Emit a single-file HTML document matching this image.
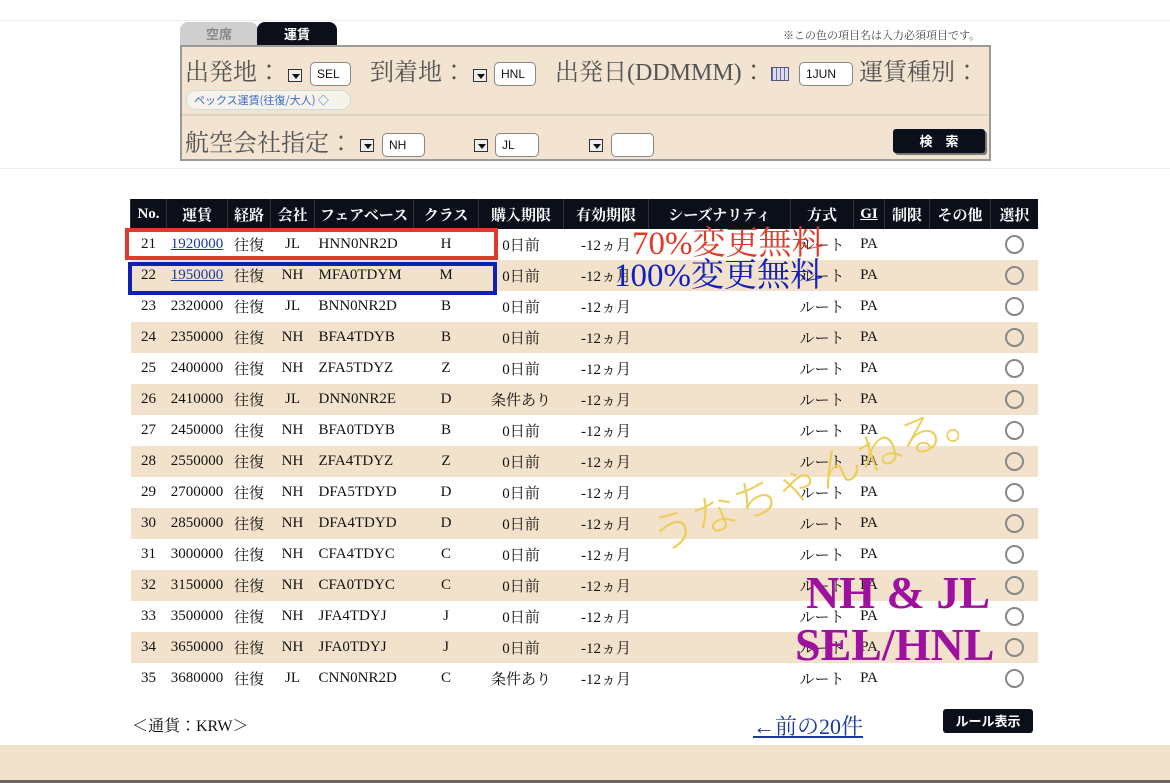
<!DOCTYPE html>
<html><head><meta charset="utf-8"><style>
*{margin:0;padding:0;box-sizing:border-box}
body{width:1170px;height:783px;background:#fff;position:relative;overflow:hidden;font-family:"Liberation Serif","Noto Serif CJK SC",serif;color:#111}
.a{position:absolute}
.tab{position:absolute;top:22px;height:24px;border-radius:8px 8px 0 0;font-size:13px;text-align:center;line-height:24px;font-family:"Noto Sans CJK JP",sans-serif;font-weight:bold}
.panel{left:180px;top:45px;width:811px;height:116px;background:#f2e4d0;border:2px solid #9a9a9a}
.lbl{position:absolute;font-size:24px;color:#555;white-space:nowrap;font-family:"Liberation Serif","Noto Serif CJK JP",serif}
.dd{position:absolute;width:14px;height:13px;border:1px solid #333;background:#eee}
.dd:after{content:"";position:absolute;left:3px;top:4px;border-left:4px solid transparent;border-right:4px solid transparent;border-top:5px solid #111}
.in{position:absolute;height:24px;background:#fff;border:1px solid #888;border-radius:5px;font-size:12px;font-family:"Liberation Sans",sans-serif;line-height:22px;padding-left:6px}
table{position:absolute;left:130px;top:199px;width:908px;border-collapse:collapse;font-size:15px}
th{background:#0b0f1a;color:#fff;height:30px;font-weight:bold;font-size:15px;border-left:1px solid #333;font-family:"Liberation Serif","Noto Serif CJK JP",serif}
td{height:31px;text-align:center;font-family:"Liberation Serif","Noto Serif CJK JP",serif;white-space:nowrap}
tr.b td{background:#f2e2cc}
td.l{text-align:left;padding-left:4px}
a{color:#1a3a9a}
.r{display:inline-block;width:19px;height:19px;border:2px solid #888;border-radius:50%;vertical-align:middle}
</style></head><body>
<div class="a" style="left:0;top:20px;width:1170px;height:1px;background:#eee"></div>
<div class="tab" style="left:180px;width:78px;background:#cfcfcf;color:#888">空席</div>
<div class="tab" style="left:257px;width:80px;background:#0b0f1a;color:#fff">運賃</div>
<div class="a" style="left:783px;top:27px;font-size:11px;color:#444;font-family:'Noto Serif CJK JP',serif">※この色の項目名は入力必須項目です。</div>
<div class="a panel">
<div class="lbl" style="left:3px;top:5px">出発地：</div>
<div class="dd" style="left:106px;top:22px"></div>
<div class="in" style="left:128px;top:15px;width:41px">SEL</div>
<div class="lbl" style="left:188px;top:5px">到着地：</div>
<div class="dd" style="left:291px;top:22px"></div>
<div class="in" style="left:312px;top:15px;width:42px">HNL</div>
<div class="lbl" style="left:373px;top:5px">出発日(DDMMM)：</div>
<div class="a" style="left:589px;top:20px;width:18px;height:14px;background:repeating-linear-gradient(90deg,#6a6ab0 0 1px,#dde 1px 4px),#dde;border:1px solid #557"></div>
<div class="in" style="left:617px;top:15px;width:54px">1JUN</div>
<div class="lbl" style="left:677px;top:5px">運賃種別：</div>
<div class="a" style="left:4px;top:43px;width:165px;height:20px;border:1px solid #cdd;border-radius:10px;background:#f7f2ea;color:#3a6ad0;font-size:11px;line-height:18px;padding-left:7px;font-family:'Noto Sans CJK JP',sans-serif">ペックス運賃(往復/大人) ◇</div>
<div class="a" style="left:0;top:67px;width:807px;height:2px;background:#e0d4c2"></div>
<div class="lbl" style="left:3px;top:76px">航空会社指定：</div>
<div class="dd" style="left:178px;top:92px"></div>
<div class="in" style="left:200px;top:86px;width:43px">NH</div>
<div class="dd" style="left:292px;top:92px"></div>
<div class="in" style="left:313px;top:86px;width:44px">JL</div>
<div class="dd" style="left:407px;top:92px"></div>
<div class="in" style="left:429px;top:86px;width:43px"></div>
<div class="a" style="left:711px;top:82px;width:92px;height:24px;background:#0b0f1a;color:#fff;border-radius:3px;font-size:13px;text-align:center;line-height:24px;font-family:'Noto Sans CJK JP',sans-serif;font-weight:bold;box-shadow:2px 2px 0 #777">検　索</div>
</div>
<div class="a" style="left:0;top:168px;width:1170px;height:1px;background:#eee"></div>
<table>
<tr><th style="width:36px">No.</th><th style="width:61px">運賃</th><th style="width:43px">経路</th><th style="width:44px">会社</th><th style="width:99px">フェアベース</th><th style="width:65px">クラス</th><th style="width:85px">購入期限</th><th style="width:85px">有効期限</th><th style="width:142px">シーズナリティ</th><th style="width:63px">方式</th><th style="width:31px"><u>GI</u></th><th style="width:45px">制限</th><th style="width:61px">その他</th><th>選択</th></tr>
<tr><td>21</td><td><a href="#">1920000</a></td><td>往復</td><td>JL</td><td class="l">HNN0NR2D</td><td>H</td><td>0日前</td><td>-12ヵ月</td><td></td><td>ルート</td><td>PA</td><td></td><td></td><td><span class="r"></span></td></tr>
<tr class="b"><td>22</td><td><a href="#">1950000</a></td><td>往復</td><td>NH</td><td class="l">MFA0TDYM</td><td>M</td><td>0日前</td><td>-12ヵ月</td><td></td><td>ルート</td><td>PA</td><td></td><td></td><td><span class="r"></span></td></tr>
<tr><td>23</td><td>2320000</td><td>往復</td><td>JL</td><td class="l">BNN0NR2D</td><td>B</td><td>0日前</td><td>-12ヵ月</td><td></td><td>ルート</td><td>PA</td><td></td><td></td><td><span class="r"></span></td></tr>
<tr class="b"><td>24</td><td>2350000</td><td>往復</td><td>NH</td><td class="l">BFA4TDYB</td><td>B</td><td>0日前</td><td>-12ヵ月</td><td></td><td>ルート</td><td>PA</td><td></td><td></td><td><span class="r"></span></td></tr>
<tr><td>25</td><td>2400000</td><td>往復</td><td>NH</td><td class="l">ZFA5TDYZ</td><td>Z</td><td>0日前</td><td>-12ヵ月</td><td></td><td>ルート</td><td>PA</td><td></td><td></td><td><span class="r"></span></td></tr>
<tr class="b"><td>26</td><td>2410000</td><td>往復</td><td>JL</td><td class="l">DNN0NR2E</td><td>D</td><td>条件あり</td><td>-12ヵ月</td><td></td><td>ルート</td><td>PA</td><td></td><td></td><td><span class="r"></span></td></tr>
<tr><td>27</td><td>2450000</td><td>往復</td><td>NH</td><td class="l">BFA0TDYB</td><td>B</td><td>0日前</td><td>-12ヵ月</td><td></td><td>ルート</td><td>PA</td><td></td><td></td><td><span class="r"></span></td></tr>
<tr class="b"><td>28</td><td>2550000</td><td>往復</td><td>NH</td><td class="l">ZFA4TDYZ</td><td>Z</td><td>0日前</td><td>-12ヵ月</td><td></td><td>ルート</td><td>PA</td><td></td><td></td><td><span class="r"></span></td></tr>
<tr><td>29</td><td>2700000</td><td>往復</td><td>NH</td><td class="l">DFA5TDYD</td><td>D</td><td>0日前</td><td>-12ヵ月</td><td></td><td>ルート</td><td>PA</td><td></td><td></td><td><span class="r"></span></td></tr>
<tr class="b"><td>30</td><td>2850000</td><td>往復</td><td>NH</td><td class="l">DFA4TDYD</td><td>D</td><td>0日前</td><td>-12ヵ月</td><td></td><td>ルート</td><td>PA</td><td></td><td></td><td><span class="r"></span></td></tr>
<tr><td>31</td><td>3000000</td><td>往復</td><td>NH</td><td class="l">CFA4TDYC</td><td>C</td><td>0日前</td><td>-12ヵ月</td><td></td><td>ルート</td><td>PA</td><td></td><td></td><td><span class="r"></span></td></tr>
<tr class="b"><td>32</td><td>3150000</td><td>往復</td><td>NH</td><td class="l">CFA0TDYC</td><td>C</td><td>0日前</td><td>-12ヵ月</td><td></td><td>ルート</td><td>PA</td><td></td><td></td><td><span class="r"></span></td></tr>
<tr><td>33</td><td>3500000</td><td>往復</td><td>NH</td><td class="l">JFA4TDYJ</td><td>J</td><td>0日前</td><td>-12ヵ月</td><td></td><td>ルート</td><td>PA</td><td></td><td></td><td><span class="r"></span></td></tr>
<tr class="b"><td>34</td><td>3650000</td><td>往復</td><td>NH</td><td class="l">JFA0TDYJ</td><td>J</td><td>0日前</td><td>-12ヵ月</td><td></td><td>ルート</td><td>PA</td><td></td><td></td><td><span class="r"></span></td></tr>
<tr><td>35</td><td>3680000</td><td>往復</td><td>JL</td><td class="l">CNN0NR2D</td><td>C</td><td>条件あり</td><td>-12ヵ月</td><td></td><td>ルート</td><td>PA</td><td></td><td></td><td><span class="r"></span></td></tr>
</table>
<div class="a" style="left:125px;top:228px;width:373px;height:32px;border:4px solid #e03a2a"></div>
<div class="a" style="left:128px;top:262px;width:369px;height:33px;border:4px solid #1020b0"></div>
<div class="a" style="left:632px;top:226px;font-size:33px;color:#e03a2a;line-height:36px;white-space:nowrap">70%変更無料</div>
<div class="a" style="left:614px;top:258px;font-size:33px;color:#1020c0;line-height:36px;white-space:nowrap">100%変更無料</div>
<div class="a" style="left:652px;top:510px;font-size:44px;line-height:50px;color:#ecce5a;white-space:nowrap;transform:rotate(-21deg);transform-origin:left center;font-family:'Noto Sans CJK JP',sans-serif;font-weight:300">うなちゃんねる。</div>
<div class="a" style="left:806px;top:568px;font-size:46px;font-weight:bold;color:#a010a0;line-height:50px;white-space:nowrap">NH &amp; JL</div>
<div class="a" style="left:795px;top:620px;font-size:46px;font-weight:bold;color:#a010a0;line-height:50px;white-space:nowrap">SEL/HNL</div>
<div class="a" style="left:132px;top:713px;font-size:16px;font-family:'Liberation Serif','Noto Serif CJK JP',serif">＜通貨：KRW＞</div>
<div class="a" style="left:753px;top:710px;font-size:22px;color:#1a3a9a;text-decoration:underline;font-family:'Liberation Serif','Noto Serif CJK JP',serif">←前の20件</div>
<div class="a" style="left:943px;top:709px;width:90px;height:24px;background:#0b0f1a;color:#fff;border-radius:3px;font-size:13px;text-align:center;line-height:24px;font-weight:bold;font-family:'Noto Sans CJK JP',sans-serif">ルール表示</div>
<div class="a" style="left:0;top:745px;width:1170px;height:38px;background:#f2e2cc"></div>
<div class="a" style="left:0;top:780px;width:1170px;height:3px;background:#666"></div>
</body></html>
